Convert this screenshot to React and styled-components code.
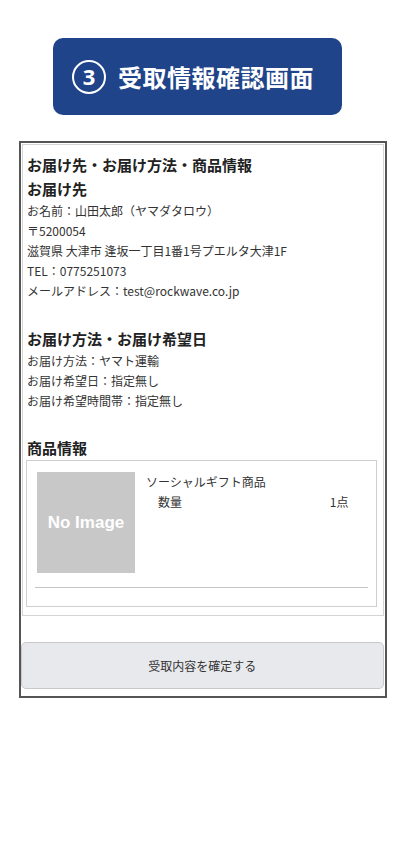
import styled, { createGlobalStyle } from "styled-components";

const GlobalStyle = createGlobalStyle`
  html, body {
    margin: 0;
    padding: 0;
    background: #fff;
  }
  body {
    font-family: "Noto Sans CJK JP", "Noto Sans", sans-serif;
    color: #333;
  }
`;

const addressLines = [
  "お名前：山田太郎（ヤマダタロウ）",
  "〒5200054",
  "滋賀県 大津市 逢坂一丁目1番1号プエルタ大津1F",
  "TEL：0775251073",
  "メールアドレス：test@rockwave.co.jp",
];

const deliveryLines = [
  "お届け方法：ヤマト運輸",
  "お届け希望日：指定無し",
  "お届け希望時間帯：指定無し",
];

const App = () => {
  return (
    <Page>
      <GlobalStyle />
      <StepHeader>
        <StepNumber>3</StepNumber>
        <StepTitle>受取情報確認画面</StepTitle>
      </StepHeader>

      <Frame>
        <InfoCard>
          <Title>お届け先・お届け方法・商品情報</Title>

          <Heading gap="1px">お届け先</Heading>
          {addressLines.map((line, i) => (
            <Line key={i}>{line}</Line>
          ))}

          <Heading gap="26px">お届け方法・お届け希望日</Heading>
          {deliveryLines.map((line, i) => (
            <Line key={i}>{line}</Line>
          ))}

          <Heading gap="25px">商品情報</Heading>
          <ProductCard>
            <ProductRow>
              <NoImage>No Image</NoImage>
              <ProductInfo>
                <ProductName>ソーシャルギフト商品</ProductName>
                <QtyRow>
                  <span>数量</span>
                  <span>1点</span>
                </QtyRow>
              </ProductInfo>
            </ProductRow>
            <Divider />
          </ProductCard>
        </InfoCard>

        <ConfirmButton type="button">受取内容を確定する</ConfirmButton>
      </Frame>
    </Page>
  );
};

const Page = styled.div`
  width: 400px;
  min-height: 850px;
  padding-top: 38px;
  box-sizing: border-box;
`;

const StepHeader = styled.div`
  margin-left: 53px;
  width: 289px;
  height: 77px;
  box-sizing: border-box;
  padding-left: 19px;
  background: #1f4489;
  border-radius: 10px;
  display: flex;
  align-items: center;
  gap: 12px;
  color: #fff;
`;

const StepNumber = styled.div`
  width: 34px;
  height: 34px;
  box-sizing: border-box;
  border: 2.5px solid #fff;
  border-radius: 50%;
  display: flex;
  align-items: center;
  justify-content: center;
  font-family: "Noto Sans", sans-serif;
  font-size: 22px;
  font-weight: 700;
  line-height: 1;
  padding-bottom: 1px;
`;

const StepTitle = styled.div`
  font-size: 24px;
  font-weight: 700;
  letter-spacing: 0.5px;
`;

const Frame = styled.div`
  margin: 26px 0 0 19px;
  width: 368px;
  height: 557px;
  box-sizing: border-box;
  border: 2px solid #555;
  padding: 1px 1.5px 0 0;
  display: flex;
  flex-direction: column;
`;

const InfoCard = styled.div`
  margin-left: 1px;
  height: 472px;
  box-sizing: border-box;
  border: 1px solid #d4d4d4;
  padding: 9px 6px 0 4px;
`;

const Title = styled.div`
  font-size: 15px;
  font-weight: 700;
  line-height: 22px;
  color: #222;
`;

const Heading = styled.div`
  margin-top: ${(p) => p.gap};
  font-size: 15px;
  font-weight: 700;
  line-height: 24px;
  color: #222;
`;

const Line = styled.div`
  font-size: 12px;
  line-height: 20px;
  color: #333;
`;

const ProductCard = styled.div`
  margin-left: -1px;
  height: 147px;
  box-sizing: border-box;
  border: 1px solid #cfcfcf;
  padding: 11px 8px 0 8px;
`;

const ProductRow = styled.div`
  display: flex;
  gap: 11px;
  padding-left: 2px;
`;

const NoImage = styled.div`
  width: 98px;
  height: 101px;
  flex-shrink: 0;
  background: #c8c8c8;
  color: #fff;
  display: flex;
  align-items: center;
  justify-content: center;
  font-family: "Liberation Sans", Arial, sans-serif;
  font-size: 17px;
  font-weight: 700;
`;

const ProductInfo = styled.div`
  flex: 1;
  padding-right: 19px;
  font-size: 12px;
  line-height: 20px;
  color: #333;
`;

const ProductName = styled.div``;

const QtyRow = styled.div`
  display: flex;
  justify-content: space-between;
  padding-left: 12px;
`;

const Divider = styled.div`
  margin-top: 14px;
  height: 1px;
  background: #c4c4c4;
`;

const ConfirmButton = styled.button`
  margin-top: 26px;
  height: 47px;
  width: 100%;
  box-sizing: border-box;
  background: #e8e9ed;
  border: 1px solid #c9c9c9;
  border-radius: 5px;
  font-family: "Noto Sans CJK JP", sans-serif;
  font-size: 12px;
  color: #333;
  cursor: pointer;
`;

export default App;
